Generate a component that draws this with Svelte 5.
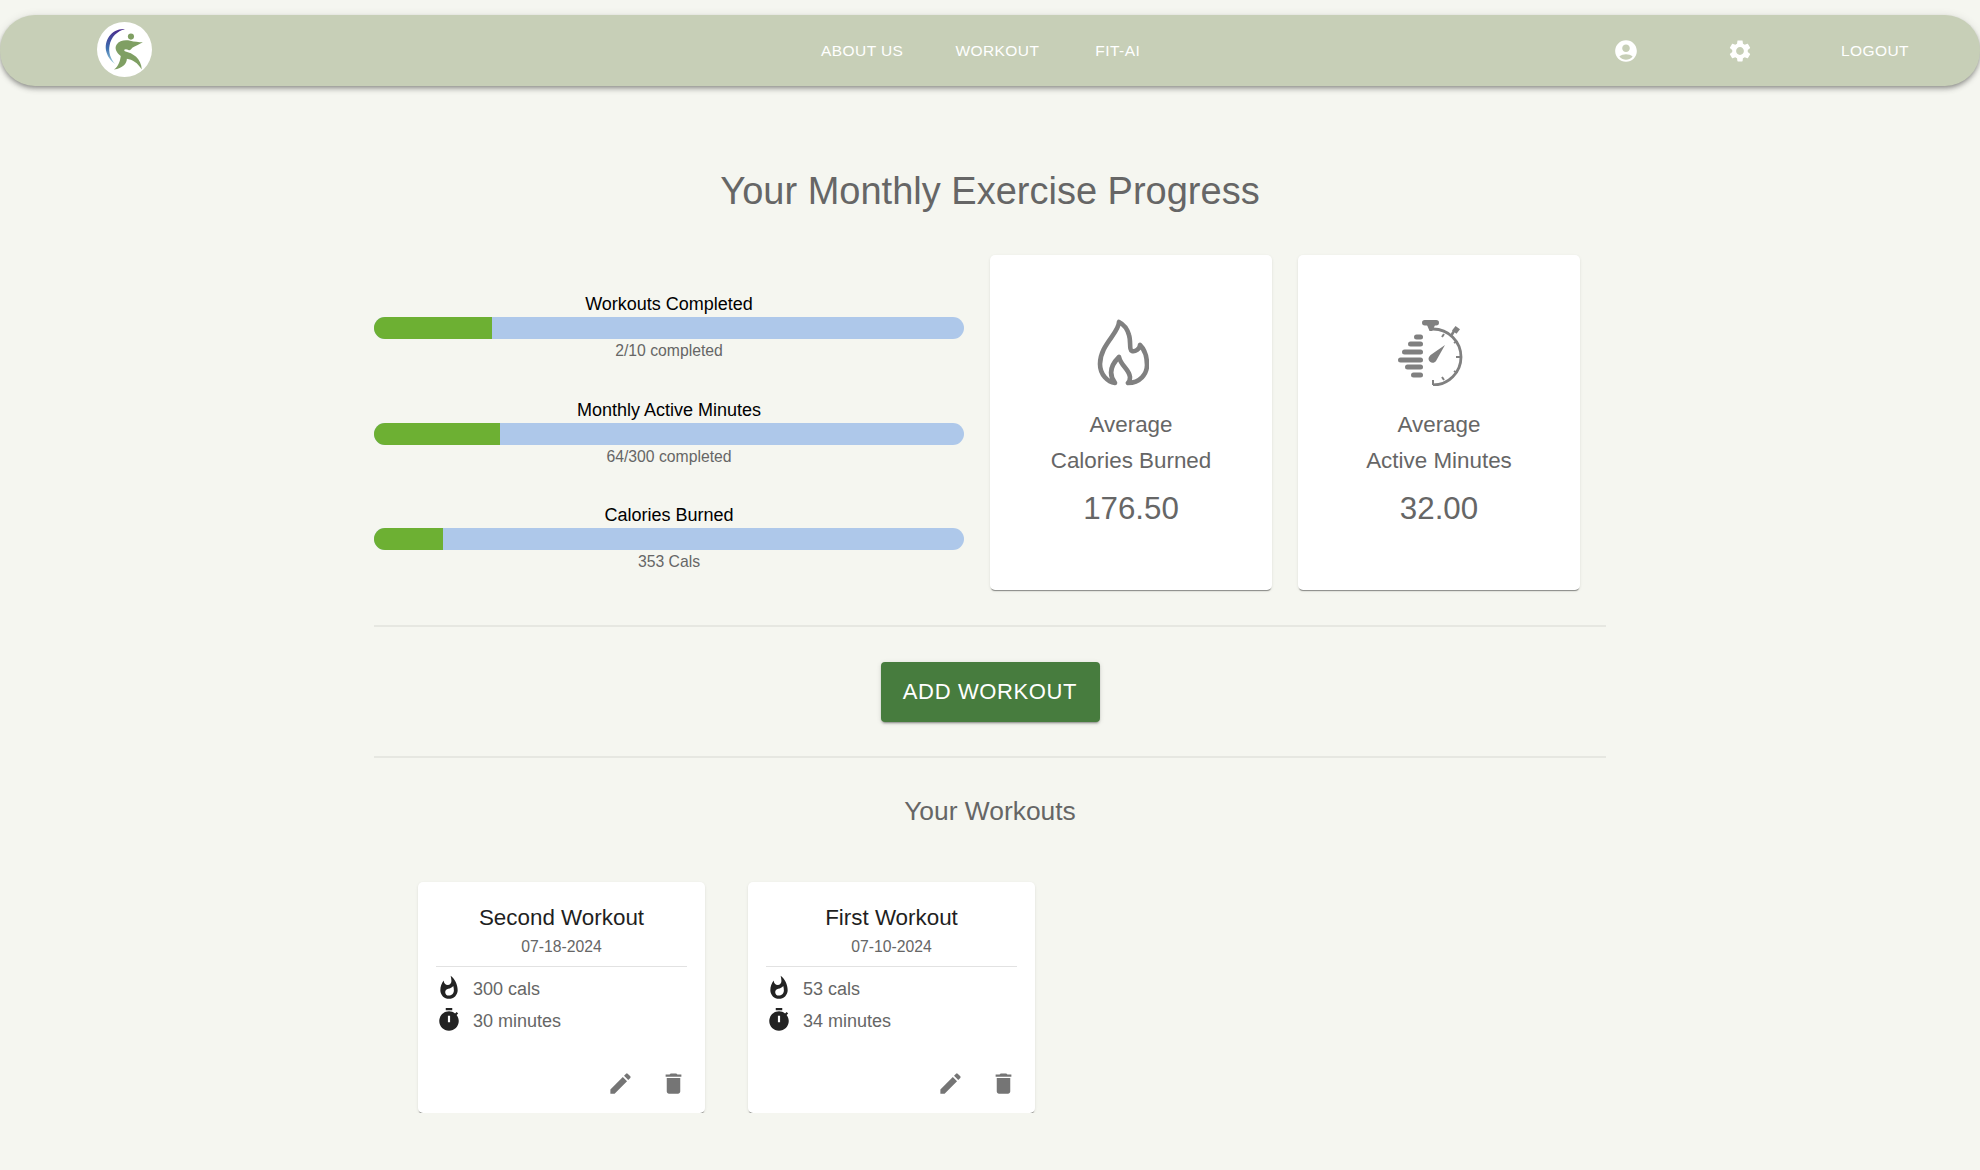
<script lang="ts">
	const bars = [
		{ label: 'Workouts Completed', note: '2/10 completed', pct: 20 },
		{ label: 'Monthly Active Minutes', note: '64/300 completed', pct: 21.33 },
		{ label: 'Calories Burned', note: '353 Cals', pct: 11.77 }
	];

	const workouts = [
		{ name: 'Second Workout', date: '07-18-2024', cals: 300, mins: 30 },
		{ name: 'First Workout', date: '07-10-2024', cals: 53, mins: 34 }
	];

	const speedLines = [
		{ y: 18, x: 17, w: 9 },
		{ y: 25, x: 11, w: 15 },
		{ y: 33, x: 5, w: 21 },
		{ y: 41, x: 1, w: 25 },
		{ y: 48, x: 8, w: 18 },
		{ y: 56, x: 14, w: 12 }
	];
</script>

<nav class="topbar">
	<div class="logo">
		<svg viewBox="52 36 162 162" width="55" height="55">
			<defs>
				<linearGradient id="arc" x1="0" y1="0" x2="0" y2="1">
					<stop offset="0" stop-color="#4b2a8c" />
					<stop offset="0.55" stop-color="#3c6fb0" />
					<stop offset="1" stop-color="#9fd0dc" />
				</linearGradient>
			</defs>
			<circle cx="133" cy="117" r="81" fill="#fff" />
			<path d="M134 57C97 54 70 90 80 125C85 142 95 152 106 160C92 145 85 125 89 105C93 80 112 62 134 57Z" fill="url(#arc)" />
			<circle cx="152" cy="79" r="9" fill="#7f9f63" />
			<path d="M187 96C176 102 164 108 156 112C152 116 150 120 146 119C138 114 128 116 134 122C158 128 182 142 184 176C172 156 156 146 140 144C140 158 128 172 102 176C116 166 120 150 122 136C110 126 102 114 110 102C118 90 134 88 150 91C162 94 175 95 187 96Z" fill="#7f9f63" />
		</svg>
	</div>
	<div class="links">
		<span>About us</span>
		<span>Workout</span>
		<span class="last-link">Fit-AI</span>
	</div>
	<div class="right">
		<svg class="nav-icon" viewBox="0 0 24 24"><path d="M12 2C6.48 2 2 6.48 2 12s4.48 10 10 10 10-4.48 10-10S17.52 2 12 2zm0 4c1.93 0 3.5 1.57 3.5 3.5S13.93 13 12 13s-3.5-1.57-3.5-3.5S10.07 6 12 6zm0 14c-2.03 0-4.43-.82-6.14-2.88C7.55 15.8 9.68 15 12 15s4.45.8 6.14 2.12C16.43 19.18 14.03 20 12 20z" /></svg>
		<svg class="nav-icon gear" viewBox="0 0 24 24"><path d="M19.14 12.94c.04-.3.06-.61.06-.94 0-.32-.02-.64-.07-.94l2.03-1.58c.18-.14.23-.41.12-.61l-1.92-3.32c-.12-.22-.37-.29-.59-.22l-2.39.96c-.5-.38-1.03-.7-1.62-.94l-.36-2.54c-.04-.24-.24-.41-.48-.41h-3.84c-.24 0-.43.17-.47.41l-.36 2.54c-.59.24-1.13.57-1.62.94l-2.39-.96c-.22-.08-.47 0-.59.22L2.74 8.87c-.12.21-.08.47.12.61l2.03 1.58c-.05.3-.09.63-.09.94s.02.64.07.94l-2.03 1.58c-.18.14-.23.41-.12.61l1.92 3.32c.12.22.37.29.59.22l2.39-.96c.5.38 1.03.7 1.62.94l.36 2.54c.05.24.24.41.48.41h3.84c.24 0 .44-.17.47-.41l.36-2.54c.59-.24 1.13-.56 1.62-.94l2.39.96c.22.08.47 0 .59-.22l1.92-3.32c.12-.22.07-.47-.12-.61l-2.01-1.58zM12 15.6c-1.98 0-3.6-1.62-3.6-3.6s1.62-3.6 3.6-3.6 3.6 1.62 3.6 3.6-1.62 3.6-3.6 3.6z" /></svg>
		<span class="logout">Logout</span>
	</div>
</nav>

<main>
	<h1>Your Monthly Exercise Progress</h1>

	<section class="progress">
		<div class="bars">
			{#each bars as bar}
				<div class="bar-group">
					<div class="bar-label">{bar.label}</div>
					<div class="track">
						<div class="fill" style="width: {bar.pct}%"></div>
					</div>
					<div class="bar-note">{bar.note}</div>
				</div>
			{/each}
		</div>

		<article class="stat">
			<svg class="stat-icon" viewBox="0 0 52 67" width="52" height="67">
				<path d="M22 3C22 14 3 26 3 45C3 56 11 63 18 64C12 56 13 47 22 38C24 47 32 50 33 58C33 61 32 63 31 64C43 64 50 55 50 46C50 38 47 30 43 26C43 30 38 33 35 32C32 31 34 22 32 16C30 9 26 5 22 3Z" fill="none" stroke="#808080" stroke-width="4.600" stroke-linejoin="round" />
			</svg>
			<div class="stat-text">Average<br />Calories Burned</div>
			<div class="stat-value">176.50</div>
		</article>

		<article class="stat">
			<svg class="stat-icon timer" viewBox="0 0 68 67" width="68" height="67">
				<g fill="#808080">
					<rect x="25" y="1" width="17" height="5.500" rx="2.750" />
					<path d="M30 6h8l-2.500 6h-3z" />
					<path d="M55 11.500l3.500-4.500 4.500 3.200-3.500 4.500z" />
					{#each speedLines as line}
						<rect x={line.x} y={line.y - 2.5} width={line.w} height="5" rx="2.500" />
					{/each}
					<path d="M48 26L39 42C37 45 32 44 31.500 40C31.500 37.500 33 36.500 35 35Z" />
				</g>
				<path d="M36 10A28 28 0 0 1 36 66" fill="none" stroke="#808080" stroke-width="2.800" />
				<path d="M59 38h5M57 24l3-2M57 52l3 2M47 61l-2-3M36 66v-5M47 15l-2 3" stroke="#808080" stroke-width="2" fill="none" />
				<path d="M54 17l3-5" stroke="#808080" stroke-width="2.500" />
			</svg>
			<div class="stat-text">Average<br />Active Minutes</div>
			<div class="stat-value">32.00</div>
		</article>
	</section>

	<hr />
	<div class="add-row">
		<button class="add">Add Workout</button>
	</div>
	<hr />

	<h2>Your Workouts</h2>

	<section class="workouts">
		{#each workouts as w}
			<article class="workout">
				<h3>{w.name}</h3>
				<div class="date">{w.date}</div>
				<div class="rule"></div>
				<div class="line">
					<svg class="line-icon" viewBox="0 0 24 24"><path d="M13.5.67s.74 2.65.74 4.8c0 2.06-1.35 3.73-3.41 3.73-2.07 0-3.63-1.67-3.63-3.73l.03-.36C5.21 7.51 4 10.62 4 14c0 4.42 3.58 8 8 8s8-3.58 8-8C20 8.61 17.41 3.8 13.5.67zM11.71 19c-1.78 0-3.22-1.4-3.22-3.14 0-1.62 1.05-2.76 2.81-3.12 1.77-.36 3.6-1.21 4.62-2.58.39 1.29.59 2.65.59 4.04 0 2.65-2.15 4.8-4.8 4.8z" /></svg>
					<span>{w.cals} cals</span>
				</div>
				<div class="line">
					<svg class="line-icon" viewBox="0 0 24 24"><path d="M9 1h6v2H9zm10.030 6.390 1.420-1.420c-.43-.51-.9-.99-1.410-1.410l-1.420 1.420C16.070 4.740 14.120 4 12 4c-4.970 0-9 4.030-9 9s4.020 9 9 9 9-4.030 9-9c0-2.120-.74-4.070-1.970-5.610zM13 14h-2V8h2v6z" /></svg>
					<span>{w.mins} minutes</span>
				</div>
				<div class="actions">
					<svg class="action" viewBox="0 0 24 24"><path d="M3 17.25V21h3.75L17.81 9.94l-3.75-3.75L3 17.25zM20.71 7.04c.39-.39.39-1.02 0-1.41l-2.34-2.34a.9959.9959 0 0 0-1.41 0l-1.83 1.83 3.75 3.75 1.83-1.83z" /></svg>
					<svg class="action" viewBox="0 0 24 24"><path d="M6 19c0 1.1.9 2 2 2h8c1.1 0 2-.9 2-2V7H6v12zM19 4h-3.5l-1-1h-5l-1 1H5v2h14V4z" /></svg>
				</div>
			</article>
		{/each}
	</section>
</main>

<style>
	:global(body) {
		background: #f5f6f0;
		font-family: 'Liberation Sans', Arial, sans-serif;
		color: #666;
	}

	.topbar {
		display: flex;
		align-items: center;
		height: 71px;
		margin-top: 15px;
		padding: 0 71px 0 97px;
		border-radius: 35px;
		background: #c7cfb7;
		box-shadow:
			0 2px 4px -1px rgba(0, 0, 0, 0.3),
			0 4px 5px 0 rgba(0, 0, 0, 0.14),
			0 1px 10px 0 rgba(0, 0, 0, 0.1);
		color: #fff;
		font-size: 15.5px;
		letter-spacing: 0.43px;
		text-transform: uppercase;
	}

	.logo {
		display: flex;
		margin-top: -2px;
	}

	.links {
		display: flex;
		flex: 1;
		gap: 52px;
		padding-left: 669px;
		margin-top: 1px;
	}

	.last-link {
		margin-left: 4px;
	}

	.right {
		display: flex;
		align-items: center;
		margin-top: 1px;
	}

	.nav-icon {
		width: 26px;
		height: 26px;
		fill: #fff;
	}

	.gear {
		margin-left: 88px;
	}

	.logout {
		margin-left: 88px;
	}

	main {
		width: 1232px;
		margin: 0 auto;
	}

	h1 {
		margin: 83px 0 42px;
		font-size: 38px;
		font-weight: 400;
		line-height: 44px;
		text-align: center;
	}

	.progress {
		display: grid;
		grid-template-columns: 590px 282px 282px;
		gap: 26px;
	}

	.bars {
		display: flex;
		flex-direction: column;
		gap: 34.5px;
		padding-top: 37px;
	}

	.bar-label {
		color: #000;
		font-size: 18px;
		line-height: 24px;
		text-align: center;
	}

	.track {
		height: 22px;
		margin-top: 1px;
		overflow: hidden;
		border-radius: 11px;
		background: #aec8ea;
	}

	.fill {
		height: 100%;
		background: #6db033;
	}

	.bar-note {
		font-size: 15.75px;
		line-height: 24px;
		text-align: center;
	}

	.stat {
		display: flex;
		flex-direction: column;
		align-items: center;
		height: 335px;
		padding-top: 64px;
		box-sizing: border-box;
		border-radius: 5px;
		background: #fff;
		box-shadow:
			0 2px 1px -1px rgba(0, 0, 0, 0.4),
			0 1px 3px 0 rgba(0, 0, 0, 0.1);
	}

	.stat-icon {
		margin-right: 16px;
	}

	.stat-text {
		margin-top: 21px;
		font-size: 22.4px;
		line-height: 36px;
		text-align: center;
	}

	.stat-value {
		margin-top: 8px;
		font-size: 31.3px;
		line-height: 44px;
	}

	hr {
		height: 2px;
		margin: 0;
		border: none;
		background: #e6e7e1;
	}

	.progress + hr {
		margin-top: 35px;
	}

	.add-row {
		display: flex;
		justify-content: center;
		padding: 35px 0 34px;
	}

	.add {
		width: 219px;
		height: 60px;
		padding: 0;
		border: none;
		border-radius: 4px;
		background: #477c3e;
		box-shadow:
			0 3px 1px -2px rgba(0, 0, 0, 0.2),
			0 2px 2px 0 rgba(0, 0, 0, 0.14),
			0 1px 5px 0 rgba(0, 0, 0, 0.12);
		color: #fff;
		font-family: inherit;
		font-size: 22px;
		letter-spacing: 0.63px;
		text-transform: uppercase;
	}

	h2 {
		margin: 37px 0 55px;
		font-size: 26.4px;
		font-weight: 400;
		line-height: 32px;
		text-align: center;
	}

	.workouts {
		display: flex;
		gap: 43px;
		padding-left: 44px;
	}

	.workout {
		display: flex;
		flex-direction: column;
		width: 287px;
		height: 231px;
		padding: 21px 18px 16px;
		box-sizing: border-box;
		border-radius: 5px;
		background: #fff;
		box-shadow:
			0 2px 1px -1px rgba(0, 0, 0, 0.4),
			0 1px 3px 0 rgba(0, 0, 0, 0.1);
	}

	h3 {
		margin: 0;
		color: #1f1f1f;
		font-size: 22.4px;
		font-weight: 400;
		line-height: 30px;
		text-align: center;
	}

	.date {
		font-size: 15.75px;
		line-height: 24px;
		text-align: center;
		margin-top: 2px;
	}

	.rule {
		height: 1px;
		margin: 7px 0 6px;
		background: #e2e2e2;
	}

	.line {
		display: flex;
		align-items: center;
		gap: 11px;
		height: 32px;
		font-size: 18px;
	}

	.line-icon {
		width: 26px;
		height: 26px;
		margin-top: -2px;
		fill: #222;
	}

	.actions {
		display: flex;
		justify-content: flex-end;
		gap: 26px;
		margin-top: auto;
	}

	.action {
		width: 27px;
		height: 27px;
		fill: #757575;
	}
</style>
